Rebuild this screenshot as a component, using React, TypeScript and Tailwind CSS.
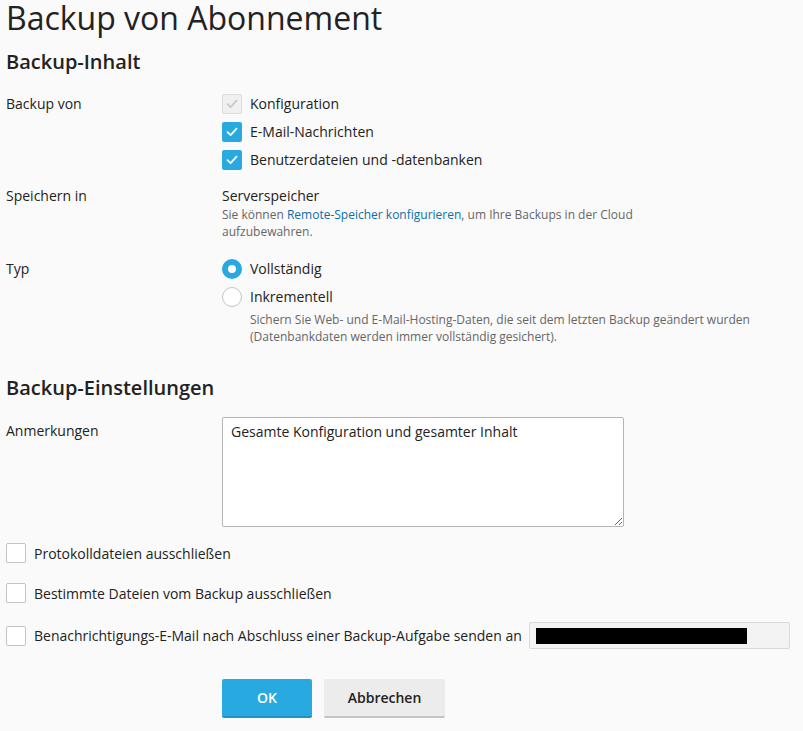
import React from "react";

function Check({ state }: { state: "on" | "off" | "disabled" }) {
  if (state === "off")
    return <span className="h-5 w-5 shrink-0 rounded-[2px] border border-[#c4c4c4] bg-white" />;
  const disabled = state === "disabled";
  return (
    <span
      className={
        disabled
          ? "flex h-5 w-5 shrink-0 items-center justify-center rounded-[2px] border border-[#dcdcdc] bg-[#f0f0f0]"
          : "flex h-5 w-5 shrink-0 items-center justify-center rounded-[2px] bg-[#28aae1]"
      }
    >
      <svg width="14" height="14" viewBox="0 0 14 14" fill="none">
        <path
          d="M2.5 7.2 L5.6 10.2 L11.5 3.6"
          stroke={disabled ? "#c8c8c8" : "#ffffff"}
          strokeWidth="1.8"
          strokeLinecap="round"
          strokeLinejoin="round"
        />
      </svg>
    </span>
  );
}

function Radio({ on }: { on: boolean }) {
  return on ? (
    <span className="flex h-5 w-5 shrink-0 items-center justify-center rounded-full bg-[#28aae1]">
      <span className="h-2 w-2 rounded-full bg-white" />
    </span>
  ) : (
    <span className="h-5 w-5 shrink-0 rounded-full border border-[#c4c4c4] bg-white" />
  );
}

export default function App() {
  return (
    <div className="min-h-[731px] bg-[#fafafa] pl-[6px] text-[14px] text-[#222] [font-family:'Open_Sans',sans-serif]">
      <h1 className="text-[32px] font-normal leading-[36px]">Backup von Abonnement</h1>

      <h2 className="mt-[13px] text-[20px] font-semibold leading-[26px]">Backup-Inhalt</h2>

      <div className="mt-[19px] grid grid-cols-[216px_1fr] gap-y-[16px]">
        <div className="leading-5">Backup von</div>
        <div className="flex flex-col gap-2">
          <label className="flex items-center gap-2 leading-5">
            <Check state="disabled" />
            Konfiguration
          </label>
          <label className="flex items-center gap-2 leading-5">
            <Check state="on" />
            E-Mail-Nachrichten
          </label>
          <label className="flex items-center gap-2 leading-5">
            <Check state="on" />
            Benutzerdateien und -datenbanken
          </label>
        </div>

        <div className="leading-5">Speichern in</div>
        <div>
          <div className="leading-5">Serverspeicher</div>
          <p className="text-[12px] leading-[17px] text-[#666]">
            Sie können <span className="text-[#0b70a8]">Remote-Speicher konfigurieren</span>, um Ihre Backups in der Cloud
            <br />
            aufzubewahren.
          </p>
        </div>

        <div className="pt-[3px] leading-5">Typ</div>
        <div className="flex flex-col gap-2 pt-[3px]">
          <label className="flex items-center gap-2 leading-5">
            <Radio on />
            Vollständig
          </label>
          <div>
            <label className="flex items-center gap-2 leading-5">
              <Radio on={false} />
              Inkrementell
            </label>
            <p className="mt-[4px] pl-7 text-[12px] leading-[17px] text-[#666]">
              Sichern Sie Web- und E-Mail-Hosting-Daten, die seit dem letzten Backup geändert wurden
              <br />
              (Datenbankdaten werden immer vollständig gesichert).
            </p>
          </div>
        </div>
      </div>

      <h2 className="mt-[30px] text-[20px] font-semibold leading-[26px]">Backup-Einstellungen</h2>

      <div className="mt-[16px] grid grid-cols-[216px_1fr]">
        <div className="pt-[4px] leading-5">Anmerkungen</div>
        <textarea
          className="h-[110px] w-[402px] resize-y rounded-[2px] border border-[#b5b5b5] bg-white px-2 py-[4px] text-[14px] leading-5 text-[#222] outline-none"
          defaultValue="Gesamte Konfiguration und gesamter Inhalt"
        />
      </div>

      <div className="mt-[16px] flex flex-col">
        <label className="flex h-5 items-center gap-2">
          <Check state="off" />
          Protokolldateien ausschließen
        </label>
        <label className="mt-[20px] flex h-5 items-center gap-2">
          <Check state="off" />
          Bestimmte Dateien vom Backup ausschließen
        </label>
        <div className="mt-[19px] flex h-[27px] items-center gap-2">
          <Check state="off" />
          <span>Benachrichtigungs-E-Mail nach Abschluss einer Backup-Aufgabe senden an</span>
          <div className="-ml-[1px] flex h-[27px] w-[261px] items-center rounded-[2px] border border-[#d9d9d9] bg-[#f3f3f3] px-[6px]">
            <span className="h-[16px] w-[211px] bg-black" />
          </div>
        </div>
      </div>

      <div className="mt-[30px] flex gap-3 pl-[216px]">
        <button className="h-[39px] w-[90px] rounded-[2px] border-b-2 border-[#1f92c6] bg-[#28aae1] text-[14px] font-semibold text-white">
          OK
        </button>
        <button className="h-[39px] w-[121px] rounded-[2px] border-b-2 border-[#c4c4c4] bg-[#ececec] text-[14px] font-semibold text-[#222]">
          Abbrechen
        </button>
      </div>
    </div>
  );
}
